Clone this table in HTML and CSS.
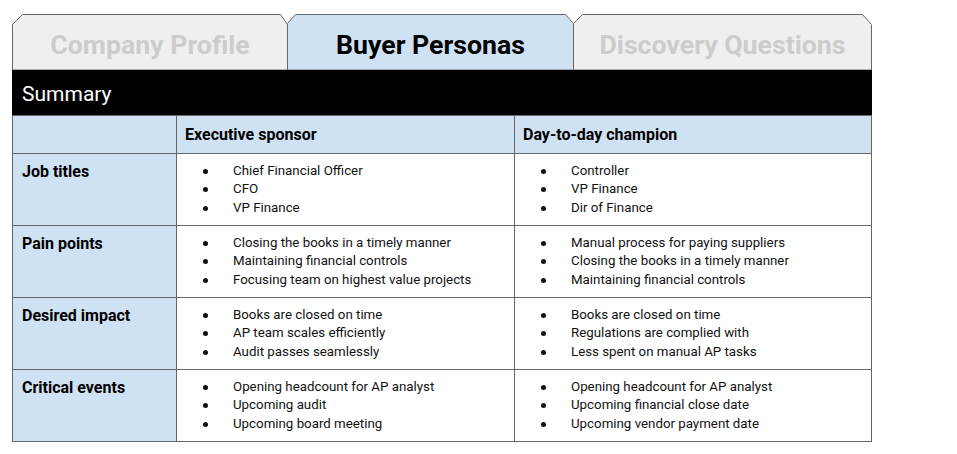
FILE: index.html
```html
<!DOCTYPE html>
<html lang="en">
<head>
<meta charset="utf-8">
<title>Buyer Personas</title>
<link rel="stylesheet" href="styles.css">
</head>
<body>
<div class="doc">
  <div class="tabs">
    <div class="tab tab-1 tab-off">
      <svg class="tab-shape" width="276" height="56" viewBox="0 0 276 56"><polygon points="0.5,56 0.5,10.5 10.5,0.5 268.5,0.5 275.5,10.5 275.5,56"/></svg>
      <span class="tab-label">Company Profile</span>
    </div>
    <div class="tab tab-2 tab-on">
      <svg class="tab-shape" width="287" height="56" viewBox="0 0 287 56"><polygon points="0.5,56 0.5,9.5 8.5,0.5 278.5,0.5 286.5,9.5 286.5,56"/></svg>
      <span class="tab-label">Buyer Personas</span>
    </div>
    <div class="tab tab-3 tab-off">
      <svg class="tab-shape" width="299" height="56" viewBox="0 0 299 56"><polygon points="0.5,56 0.5,9.5 9.5,0.5 289.5,0.5 298.5,10.5 298.5,56"/></svg>
      <span class="tab-label">Discovery Questions</span>
    </div>
  </div>
  <div class="summary">Summary</div>
  <div class="grid">
    <div class="cell head"></div>
    <div class="cell head">Executive sponsor</div>
    <div class="cell head">Day-to-day champion</div>

    <div class="cell label">Job titles</div>
    <div class="cell body"><ul class="bullets"><li>Chief Financial Officer</li><li>CFO</li><li>VP Finance</li></ul></div>
    <div class="cell body"><ul class="bullets"><li>Controller</li><li>VP Finance</li><li>Dir of Finance</li></ul></div>

    <div class="cell label">Pain points</div>
    <div class="cell body"><ul class="bullets"><li>Closing the books in a timely manner</li><li>Maintaining financial controls</li><li>Focusing team on highest value projects</li></ul></div>
    <div class="cell body"><ul class="bullets"><li>Manual process for paying suppliers</li><li>Closing the books in a timely manner</li><li>Maintaining financial controls</li></ul></div>

    <div class="cell label">Desired impact</div>
    <div class="cell body"><ul class="bullets"><li>Books are closed on time</li><li>AP team scales efficiently</li><li>Audit passes seamlessly</li></ul></div>
    <div class="cell body"><ul class="bullets"><li>Books are closed on time</li><li>Regulations are complied with</li><li>Less spent on manual AP tasks</li></ul></div>

    <div class="cell label">Critical events</div>
    <div class="cell body"><ul class="bullets"><li>Opening headcount for AP analyst</li><li>Upcoming audit</li><li>Upcoming board meeting</li></ul></div>
    <div class="cell body"><ul class="bullets"><li>Opening headcount for AP analyst</li><li>Upcoming financial close date</li><li>Upcoming vendor payment date</li></ul></div>
  </div>
</div>
</body>
</html>
```

FILE: styles.css
```css
* { box-sizing: border-box; }

html, body {
  margin: 0;
  padding: 0;
  background: #ffffff;
}

body {
  font-family: Roboto, "Liberation Sans", Arial, sans-serif;
  color: #000000;
}

.doc {
  width: 860px;
  margin: 14px 0 0 12px;
}

.tabs {
  display: flex;
  height: 56px;
}

.tab {
  position: relative;
  height: 56px;
  display: flex;
  align-items: center;
  justify-content: center;
  padding-top: 5px;
}

.tab-1 { width: 276px; }
.tab-2 { width: 287px; margin-left: -1px; }
.tab-3 { width: 299px; margin-left: -1px; }

.tab-shape {
  position: absolute;
  left: 0;
  top: 0;
  display: block;
}

.tab-shape polygon {
  stroke: #666666;
  stroke-width: 1;
}

.tab-off .tab-shape polygon { fill: #efefef; }
.tab-on .tab-shape polygon { fill: #cfe2f3; }

.tab-label {
  position: relative;
  font-size: 26.7px;
  font-weight: 700;
  line-height: 30px;
  white-space: nowrap;
}

.tab-off .tab-label { color: #cccccc; }
.tab-on .tab-label { color: #000000; }

.summary {
  height: 45px;
  background: #000000;
  color: #ffffff;
  font-size: 21px;
  line-height: 24px;
  display: flex;
  align-items: center;
  padding: 3px 0 0 10px;
}

.grid {
  display: grid;
  grid-template-columns: 164px 338px 357px;
  grid-template-rows: 38px repeat(4, 72px);
  border-left: 1px solid #666666;
  border-top: 1px solid #666666;
}

.cell {
  border-right: 1px solid #666666;
  border-bottom: 1px solid #666666;
}

.head {
  background: #cfe2f3;
  font-size: 16px;
  font-weight: 700;
  display: flex;
  align-items: center;
  padding-left: 8px;
}

.label {
  background: #cfe2f3;
  font-size: 16px;
  font-weight: 700;
  line-height: 20px;
  padding: 8px 0 0 9px;
}

.body {
  padding-top: 8px;
}

.bullets {
  list-style: none;
  margin: 0;
  padding: 0;
  font-size: 13.3px;
  line-height: 18.4px;
  color: #111111;
}

.bullets li {
  position: relative;
  padding-left: 56px;
  white-space: nowrap;
}

.bullets li::before {
  content: "";
  position: absolute;
  left: 26px;
  top: 7px;
  width: 5px;
  height: 5px;
  border-radius: 50%;
  background: #111111;
}
```
